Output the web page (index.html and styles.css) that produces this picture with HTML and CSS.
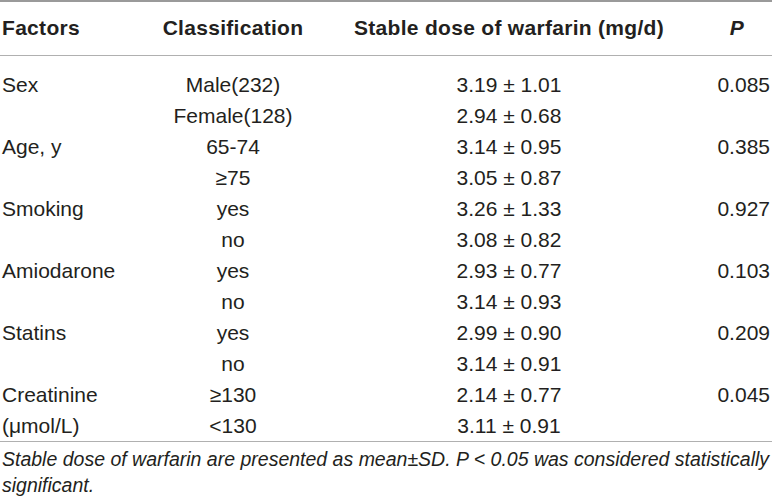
FILE: index.html
```html
<!DOCTYPE html>
<html>
<head>
<meta charset="utf-8">
<link rel="stylesheet" href="styles.css">
</head>
<body>
<table class="data">
  <colgroup>
    <col class="c1"><col class="c2"><col class="c3"><col class="c4">
  </colgroup>
  <thead>
    <tr>
      <th class="left">Factors</th>
      <th>Classification</th>
      <th>Stable dose of warfarin (mg/d)</th>
      <th class="p-head"><i>P</i></th>
    </tr>
  </thead>
  <tbody>
    <tr class="first"><td class="left">Sex</td><td>Male(232)</td><td>3.19 ± 1.01</td><td class="p">0.085</td></tr>
    <tr><td class="left"></td><td>Female(128)</td><td>2.94 ± 0.68</td><td class="p"></td></tr>
    <tr><td class="left">Age, y</td><td>65-74</td><td>3.14 ± 0.95</td><td class="p">0.385</td></tr>
    <tr><td class="left"></td><td>≥75</td><td>3.05 ± 0.87</td><td class="p"></td></tr>
    <tr><td class="left">Smoking</td><td>yes</td><td>3.26 ± 1.33</td><td class="p">0.927</td></tr>
    <tr><td class="left"></td><td>no</td><td>3.08 ± 0.82</td><td class="p"></td></tr>
    <tr><td class="left">Amiodarone</td><td>yes</td><td>2.93 ± 0.77</td><td class="p">0.103</td></tr>
    <tr><td class="left"></td><td>no</td><td>3.14 ± 0.93</td><td class="p"></td></tr>
    <tr><td class="left">Statins</td><td>yes</td><td>2.99 ± 0.90</td><td class="p">0.209</td></tr>
    <tr><td class="left"></td><td>no</td><td>3.14 ± 0.91</td><td class="p"></td></tr>
    <tr><td class="left">Creatinine</td><td>≥130</td><td>2.14 ± 0.77</td><td class="p">0.045</td></tr>
    <tr class="last"><td class="left">(μmol/L)</td><td>&lt;130</td><td>3.11 ± 0.91</td><td class="p"></td></tr>
  </tbody>
</table>
<p class="note">Stable dose of warfarin are presented as mean±SD. P &lt; 0.05 was considered statistically significant.</p>
</body>
</html>
```

FILE: styles.css
```css
html, body {
  margin: 0;
  padding: 0;
  background: #ffffff;
}

body {
  width: 772px;
  font-family: "Liberation Sans", Arial, sans-serif;
  color: #231f20;
}

.data {
  width: 772px;
  border-collapse: collapse;
  table-layout: fixed;
  font-size: 21px;
}

.c1 { width: 154px; }
.c2 { width: 158px; }
.c3 { width: 394px; }
.c4 { width: 66px; }

.data th {
  font-weight: bold;
  letter-spacing: 0.3px;
  line-height: 24px;
  padding: 14px 0 15px 0;
  text-align: center;
  border-top: 2px solid #9a9a9a;
  border-bottom: 1px solid #b0b0b0;
  white-space: nowrap;
}

.data th.p-head {
  padding-right: 4px;
}

.data td {
  line-height: 31px;
  padding: 0;
  text-align: center;
  white-space: nowrap;
}

.data td.p {
  text-align: right;
  padding-right: 2px;
}

.data .left {
  text-align: left;
  padding-left: 2px;
}

.data tr.first td {
  padding-top: 13px;
}

.data tr.last td {
  border-bottom: 1px solid #b0b0b0;
}

.note {
  margin: 0;
  padding: 4px 0 0 2px;
  font-size: 19.5px;
  line-height: 26px;
  font-style: italic;
}
```
